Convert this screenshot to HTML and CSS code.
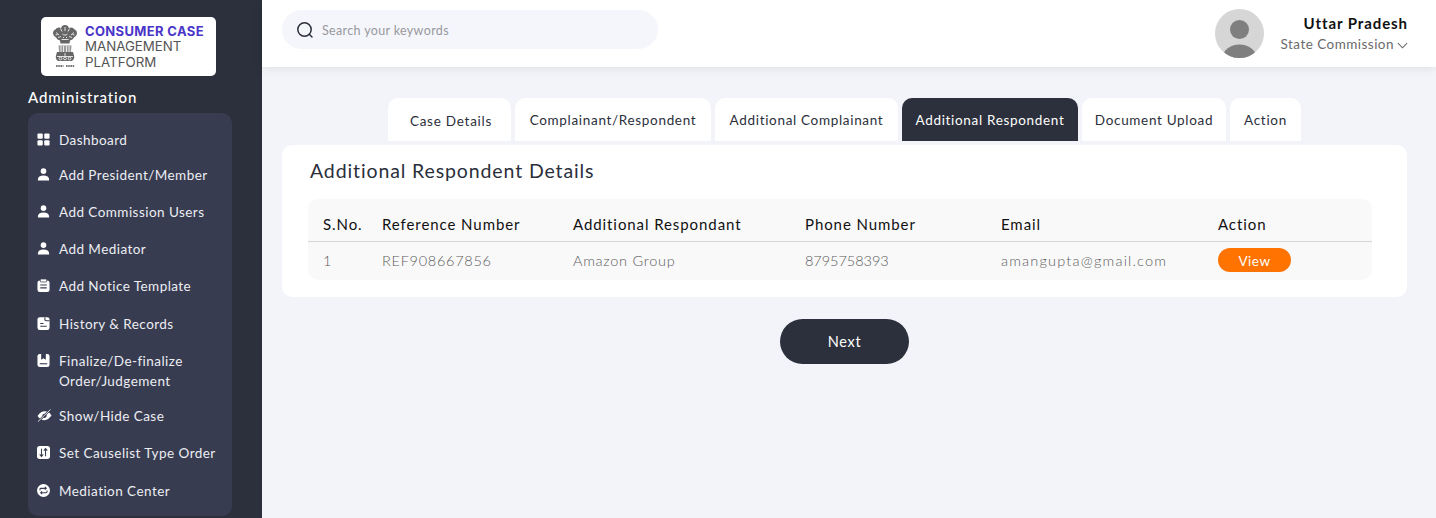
FILE: index.html
```html
<!DOCTYPE html>
<html lang="en">
<head>
<meta charset="utf-8">
<title>Additional Respondent Details</title>
<link rel="stylesheet" href="styles.css">
</head>
<body>
<div class="app">
  <aside class="sidebar">
    <div class="logo">
      <svg class="emblem" viewBox="0 0 26 44" width="26" height="44" aria-hidden="true">
        <g fill="#666">
          <path d="M13 0c2 0 3.500 1.200 3.800 3 2-1.200 4.500-.6 5.500 1.300 1.800.6 3 2.500 2.600 4.500-.3 2-1.500 3-3 3.600-.8 1.600-2 2.600-3.900 3l-.5 3H8.500l-.5-3c-1.900-.4-3.100-1.400-3.900-3C2.600 11.800 1.400 10.800 1.100 8.800.7 6.800 1.900 4.900 3.700 4.300 4.700 2.400 7.200 1.800 9.200 3 9.500 1.200 11 0 13 0z"/>
          <path d="M6.500 20.500h13l-.6 7H7.100z" fill="#9a9a9a"/>
          <path d="M5 27h16l1 3.500c.8 3-1 5.500-3 5.500H7c-2 0-3.800-2.500-3-5.500z"/>
        </g>
        <g fill="none" stroke="#fff" stroke-width=".8">
          <path d="M4 7.500l3 2.500M8.500 3.500l1.500 3M13 2v4M17.500 3.500L16 6.500M22 7.500l-3 2.500M6 12.500l3-1M20 12.500l-3-1M10.500 9c1.500 1.500 3.500 1.500 5 0M9.500 14.500h7M3.500 10l2-.5M22.500 10l-2-.5M11 12l1 1M15 12l-1 1"/>
          <path d="M9 21v6M11.500 21v6M14.500 21v6M17 21v6"/>
          <path d="M5 31.500h16M13 28v3"/>
          <circle cx="8.500" cy="33.500" r="1.400"/><circle cx="13" cy="33.500" r="1.400"/><circle cx="17.500" cy="33.500" r="1.400"/>
        </g>
        <path d="M4 41h7.500M14 41h8.500" stroke="#777" stroke-width="1.800" stroke-dasharray="1.600 .6"/>
      </svg>
      <div class="logo-text">
        <strong>CONSUMER CASE</strong>
        <span>MANAGEMENT</span>
        <span>PLATFORM</span>
      </div>
    </div>
    <h2 class="side-title">Administration</h2>
    <nav class="menu">
      <a class="item">
        <svg viewBox="0 0 14 14" class="ic"><rect x="0.500" y="0.500" width="5.700" height="5.700" rx="1.200"/><rect x="7.800" y="0.500" width="5.700" height="5.700" rx="1.200"/><rect x="0.500" y="7.800" width="5.700" height="5.700" rx="1.200"/><rect x="7.800" y="7.800" width="5.700" height="5.700" rx="1.200"/></svg>
        <span>Dashboard</span>
      </a>
      <a class="item tight">
        <svg viewBox="0 0 14 14" class="ic"><circle cx="7" cy="3.400" r="3"/><path d="M1 13.500v-1.600C1 9.800 3.200 8 7 8s6 1.800 6 3.900v1.600z"/></svg>
        <span>Add President/Member</span>
      </a>
      <a class="item">
        <svg viewBox="0 0 14 14" class="ic"><circle cx="7" cy="3.400" r="3"/><path d="M1 13.500v-1.600C1 9.800 3.200 8 7 8s6 1.800 6 3.900v1.600z"/></svg>
        <span>Add Commission Users</span>
      </a>
      <a class="item">
        <svg viewBox="0 0 14 14" class="ic"><circle cx="7" cy="3.400" r="3"/><path d="M1 13.500v-1.600C1 9.800 3.200 8 7 8s6 1.800 6 3.900v1.600z"/></svg>
        <span>Add Mediator</span>
      </a>
      <a class="item">
        <svg viewBox="0 0 14 14" class="ic"><rect x="0.500" y="1.500" width="13" height="12.500" rx="2.500"/><rect x="3.500" y="0" width="7" height="3.200" rx="1" stroke="#383c50" stroke-width=".8"/><path class="cut" d="M3.500 6.500h7M3.500 9.500h7"/></svg>
        <span>Add Notice Template</span>
      </a>
      <a class="item gap">
        <svg viewBox="0 0 14 14" class="ic"><rect x="0.500" y="0.300" width="13" height="13.700" rx="2.500"/><path class="cut" d="M8.500.5v2.200c0 .9.500 1.300 1.300 1.300h3.700M3.500 7h3.500M3.500 10h7"/></svg>
        <span>History &amp; Records</span>
      </a>
      <a class="item narrow">
        <svg viewBox="0 0 14 14" class="ic"><rect x="0.500" y="0" width="13" height="14" rx="2.500"/><path d="M4.500 0h5v6.200L7 4.700 4.500 6.200z" fill="#383c50"/><path class="cut" d="M3 10.500h8"/></svg>
        <span>Finalize/De-finalize<br>Order/Judgement</span>
      </a>
      <a class="item">
        <svg viewBox="0 0 16 14" class="ic wide"><path d="M.5 7.500C3 4 5.500 2.500 8.500 2.500s5 1.500 7 4.500c-2.500 3.500-4.500 5-7.500 5S2.500 10.500.5 7.500z"/><circle cx="8" cy="7.300" r="2.300" fill="#383c50"/><path d="M.8 14 14.800 0" stroke="#383c50" stroke-width="2.200"/><path d="M1 13.500 14.500.5" stroke="#fff" stroke-width=".9"/></svg>
        <span>Show/Hide Case</span>
      </a>
      <a class="item">
        <svg viewBox="0 0 14 14" class="ic"><rect x="0" y="0" width="14" height="14" rx="3"/><path class="cut thin" d="M4.800 3v8M2.900 9l1.900 2.200L6.700 9M9.200 11V3M7.300 5l1.900-2.200L11.100 5"/></svg>
        <span>Set Causelist Type Order</span>
      </a>
      <a class="item gap">
        <svg viewBox="0 0 14 14" class="ic"><circle cx="7" cy="7" r="7"/><path class="cut thin" d="M3.200 7V5.700c0-.6.400-1 1-1h5.600M8.500 3.200l1.500 1.500-1.500 1.500M10.800 7v1.300c0 .6-.4 1-1 1H4.200M5.500 7.800 4 9.300l1.500 1.500"/></svg>
        <span>Mediation Center</span>
      </a>
    </nav>
  </aside>
  <div class="main">
    <header class="topbar">
      <div class="search">
        <svg viewBox="0 0 18 18" width="18" height="18" class="search-ic"><circle cx="8.500" cy="8.500" r="6.700" fill="none" stroke="#2b2f3b" stroke-width="1.500"/><path d="M13.300 13.300 16 16" stroke="#2b2f3b" stroke-width="1.500" stroke-linecap="round"/></svg>
        <span class="placeholder">Search your keywords</span>
      </div>
      <div class="user">
        <svg class="avatar" viewBox="0 0 49 49" width="49" height="49"><defs><clipPath id="av"><circle cx="24.500" cy="24.500" r="24.500"/></clipPath></defs><circle cx="24.500" cy="24.500" r="24.500" fill="#d6d6d6"/><g clip-path="url(#av)" fill="#7f7f7f"><circle cx="24.500" cy="20.500" r="9.500"/><ellipse cx="24.500" cy="49" rx="17" ry="13.500"/></g></svg>
        <div class="user-text">
          <div class="user-name">Uttar Pradesh</div>
          <div class="user-role">State Commission<svg viewBox="0 0 12 7" width="11" height="7" class="chev"><path d="M1 1l5 5 5-5" fill="none" stroke="#666" stroke-width="1.100"/></svg></div>
        </div>
      </div>
    </header>
    <main class="content">
      <div class="tabs">
        <div class="tab t1">Case Details</div>
        <div class="tab t2">Complainant/Respondent</div>
        <div class="tab t3">Additional Complainant</div>
        <div class="tab t4 active">Additional Respondent</div>
        <div class="tab t5">Document Upload</div>
        <div class="tab t6">Action</div>
      </div>
      <section class="card">
        <h1 class="card-title">Additional Respondent Details</h1>
        <table class="grid">
          <thead>
            <tr>
              <th class="c1">S.No.</th><th class="c2">Reference Number</th><th class="c3">Additional Respondant</th><th class="c4">Phone Number</th><th class="c5">Email</th><th class="c6">Action</th>
            </tr>
          </thead>
          <tbody>
            <tr>
              <td>1</td><td>REF908667856</td><td>Amazon Group</td><td class="phone">8795758393</td><td class="mail">amangupta@gmail.com</td><td><span class="view">View</span></td>
            </tr>
          </tbody>
        </table>
      </section>
      <div class="actions"><button class="next" type="button">Next</button></div>
    </main>
  </div>
</div>
</body>
</html>
```
FILE: styles.css
```css
* { box-sizing: border-box; }
html, body { margin: 0; height: 100%; overflow: hidden; }
body { font-family: "Lato", "Liberation Sans", sans-serif; background: #f3f4fa; color: #2b2f3b; }
.app { display: flex; height: 518px; overflow: hidden; }

.sidebar { width: 262px; flex: none; background: #2c303c; padding: 17px 30px 0 28px; }
.logo { width: 175px; height: 59px; margin-left: 13px; background: #fff; border-radius: 5px; display: flex; align-items: center; padding-left: 11px; gap: 7px; }
.emblem { flex: none; }
.logo-text { display: flex; flex-direction: column; font-family: "Inter", "Liberation Sans", sans-serif; font-size: 13.300px; line-height: 15.500px; color: #555; font-weight: 400; white-space: nowrap; padding-top: 1px; }
.logo-text strong { color: #4a35c8; font-weight: 700; font-size: 13px; letter-spacing: .35px; }
.side-title { margin: 11px 0 6px; font-size: 15px; line-height: 20px; font-weight: 500; color: #fff; letter-spacing: .85px; }
.menu { background: #383c50; border-radius: 10px; height: 403px; padding: 8px 8px 0 9px; }
.item { display: flex; align-items: flex-start; color: #eceef3; font-size: 13.500px; line-height: 20px; letter-spacing: .45px; padding: 8.500px 0; }
.item.tight { margin-top: -2px; }
.item.gap { margin-top: 1px; }
.item.narrow { margin-bottom: -2px; }
.ic { width: 13px; height: 13px; fill: #fff; margin: 3px 9px 0 0; flex: none; }
.ic.wide { width: 15px; margin-right: 7px; }
.cut { fill: none; stroke: #383c50; stroke-width: 1.200; }
.cut.thin { stroke-width: 1.100; }

.main { flex: 1; min-width: 0; display: flex; flex-direction: column; }
.topbar { height: 67px; flex: none; background: #fff; box-shadow: 0 2px 10px rgba(0,0,0,.08); display: flex; align-items: flex-start; justify-content: space-between; padding: 10px 28px 0 20px; position: relative; }
.search { width: 376px; height: 39px; background: #f5f6fb; border-radius: 20px; display: flex; align-items: center; padding-left: 14px; gap: 8px; }
.search-ic { flex: none; }
.placeholder { color: #98989d; font-size: 12.500px; letter-spacing: .35px; padding-top: 2px; }
.user { display: flex; align-items: flex-start; margin-top: -1px; }
.user-text { margin-left: 17px; text-align: right; padding-top: 4px; }
.user-name { font-size: 15px; line-height: 20px; font-weight: 700; color: #111; letter-spacing: .92px; }
.user-role { font-size: 13.500px; line-height: 20px; color: #6b6b6b; letter-spacing: .47px; margin-top: 1px; display: flex; align-items: center; }
.chev { margin-left: 3px; margin-top: 2px; }

.content { padding: 31px 29px 0 20px; flex: 1; }
.tabs { display: flex; gap: 4px; padding-left: 106px; height: 43px; }
.tab { background: #fff; border-radius: 10px 10px 0 0; color: #2b2f3b; font-size: 13.500px; letter-spacing: .68px; display: flex; align-items: center; justify-content: center; white-space: nowrap; }
.t1 { width: 123px; padding: 2px 0 0 3px; letter-spacing: .75px; } .t2 { width: 196px; } .t3 { width: 183px; } .t4 { width: 176px; } .t5 { width: 144px; } .t6 { width: 71px; }
.tab.active { background: #2c303c; color: #fff; }
.card { margin-top: 4px; background: #fff; border-radius: 10px; height: 152px; padding: 14px 35px 0 26px; }
.card-title { margin: 0 0 16px 2px; font-size: 19.500px; line-height: 24px; font-weight: 400; letter-spacing: .88px; color: #2b2f3b; }
.grid { width: 100%; border-collapse: separate; border-spacing: 0; background: #f9f9f9; border-radius: 10px; table-layout: fixed; }
.grid th { height: 43px; text-align: left; font-weight: 400; font-size: 15px; letter-spacing: .92px; color: #111; border-bottom: 1px solid #d6d6d6; padding: 8px 0 0; }
.grid td { height: 38px; font-size: 14.500px; font-weight: 300; letter-spacing: .72px; color: #5c5c5c; padding: 0 0 2px; }
.grid td.phone { letter-spacing: -.05px; }
.grid td.mail { letter-spacing: 1.200px; }
.c1 { width: 74px; } .c2 { width: 191px; } .c3 { width: 232px; } .c4 { width: 196px; } .c5 { width: 217px; }
.grid th:first-child, .grid td:first-child { padding-left: 15px; }
.view { display: inline-flex; width: 73px; height: 24px; border-radius: 12px; background: #ff7300; color: #fff; font-size: 13.500px; font-weight: 400; align-items: center; justify-content: center; letter-spacing: .5px; padding-top: 1px; }
.actions { display: flex; justify-content: center; margin-top: 22px; }
.next { width: 129px; height: 45px; border: 0; border-radius: 23px; background: #2c303c; color: #fff; font-family: inherit; font-size: 14.500px; letter-spacing: .7px; padding-bottom: 2px; }
```
